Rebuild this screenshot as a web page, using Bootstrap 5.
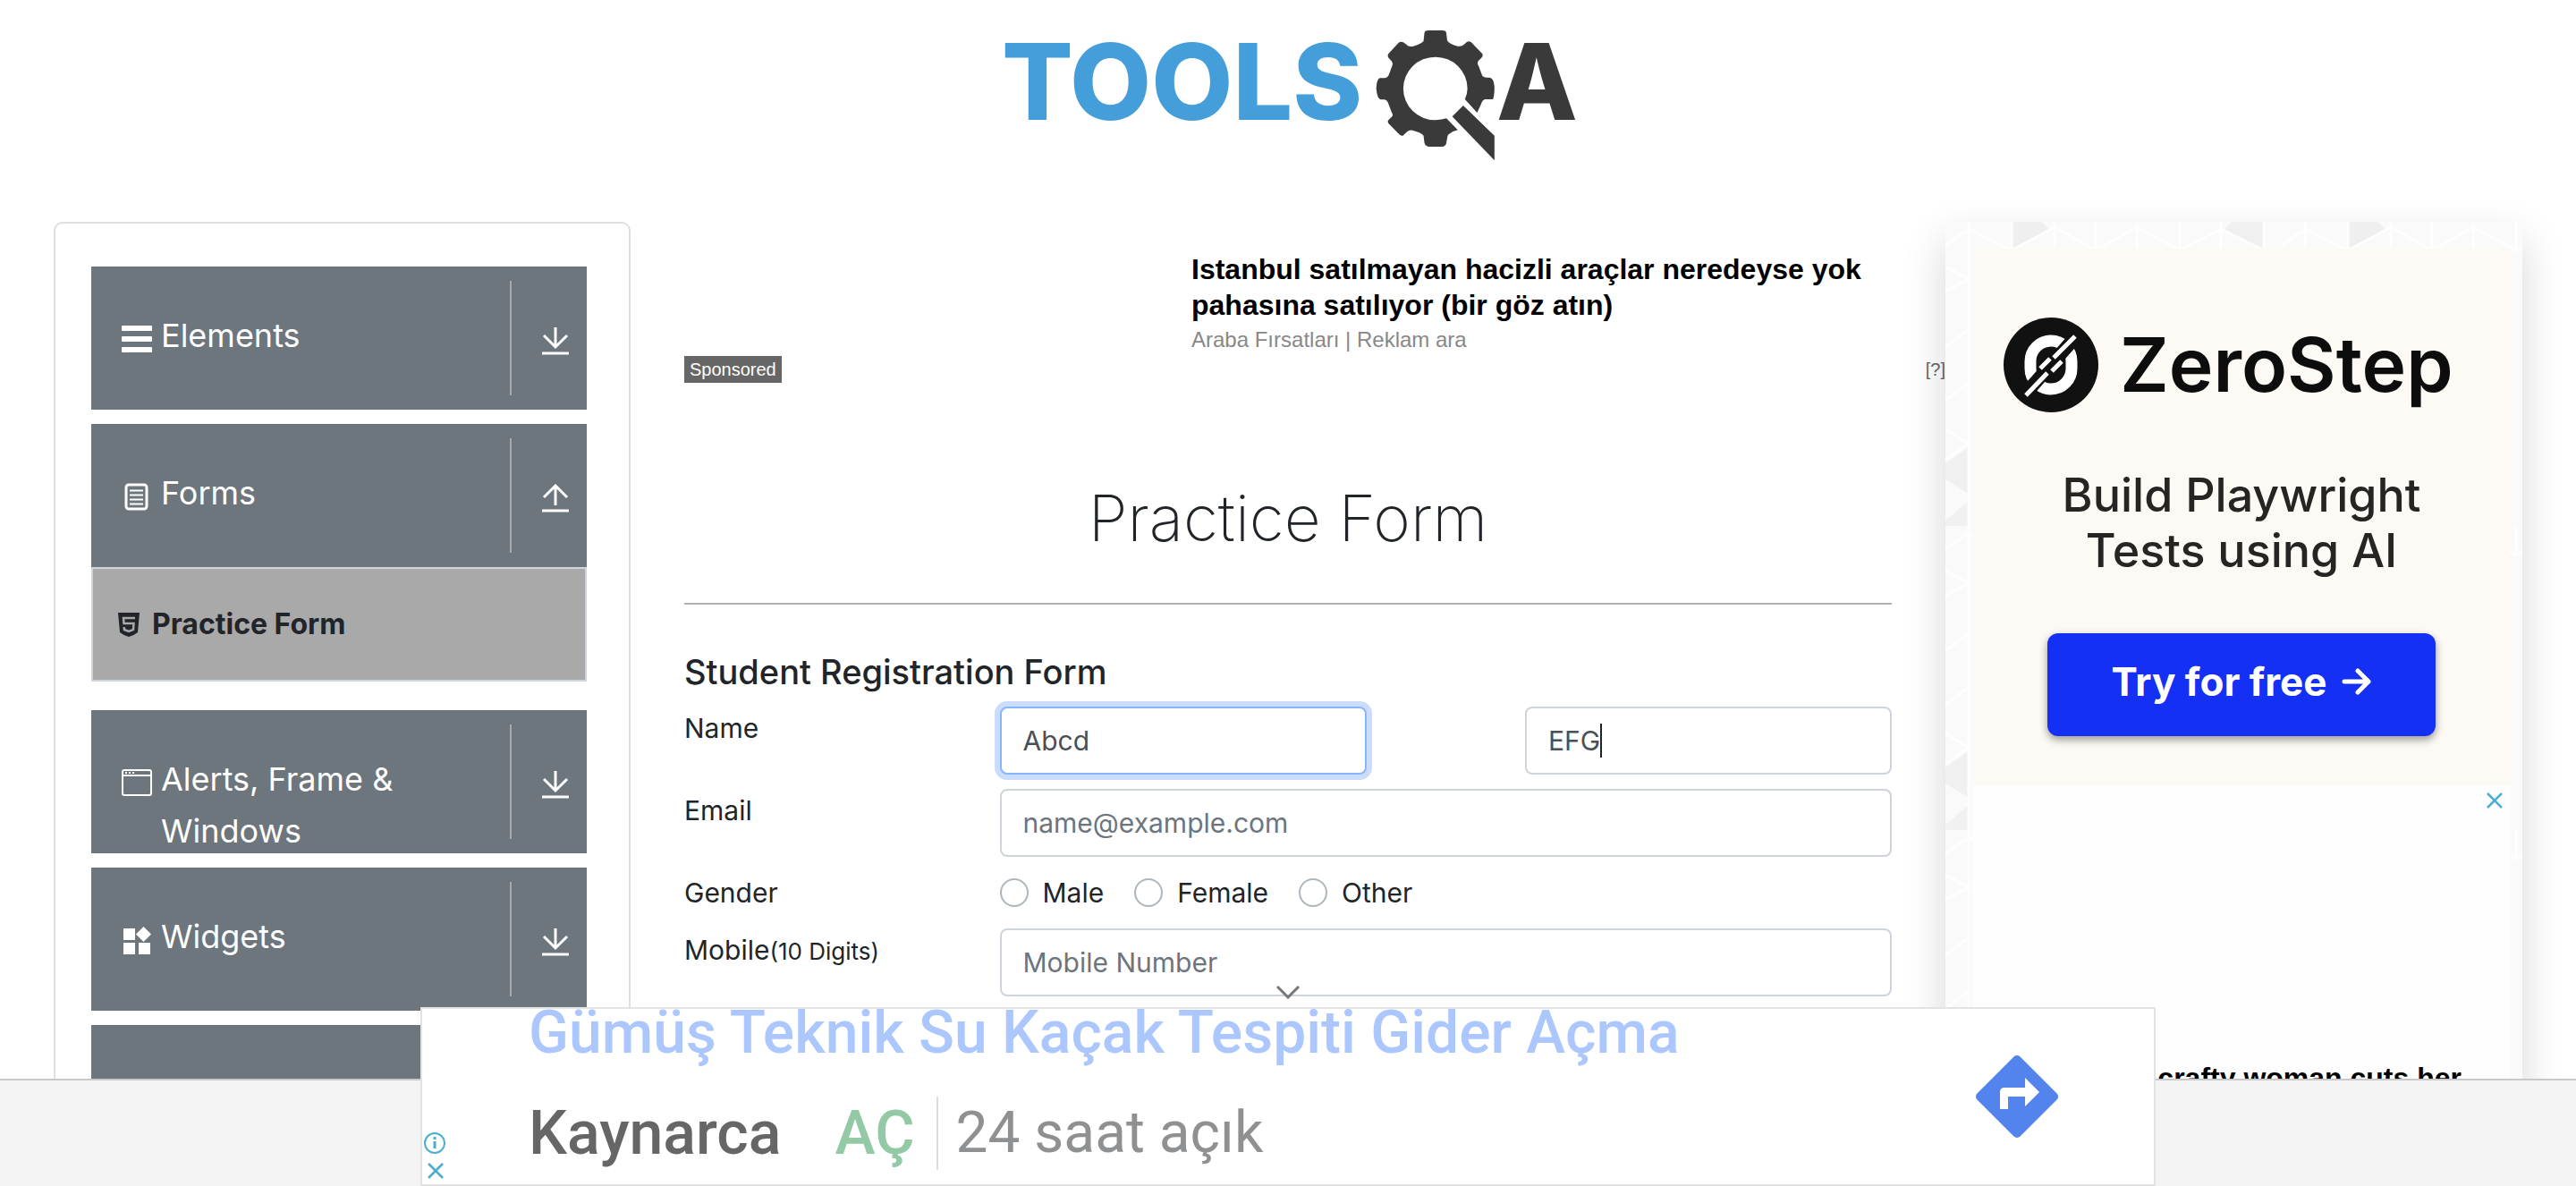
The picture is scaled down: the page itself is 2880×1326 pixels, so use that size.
<!DOCTYPE html>
<html lang="en">
<head>
<meta charset="utf-8">
<meta name="viewport" content="width=device-width, initial-scale=1">
<title>ToolsQA - Practice Form</title>
<link href="https://cdn.jsdelivr.net/npm/bootstrap@5.3.0/dist/css/bootstrap.min.css" rel="stylesheet">
<script src="https://cdn.jsdelivr.net/npm/bootstrap@5.3.0/dist/js/bootstrap.bundle.min.js"></script>
<style>
body { font-family: Inter, "Noto Sans", sans-serif; font-size: 30px; line-height: 36px; color: #212529; background: #fff; }
.site-header { height: 248px; }
.page-body { padding: 0 60px; min-height: 0; }
.page-row, .form-line { --bs-gutter-x: 60px; }
.arial { font-family: "Liberation Sans", Arial, sans-serif; }

/* sidebar */
.menu-panel { border: 2px solid #dfdfdf; border-radius: 10px; padding: 48px 47px 0 40px; height: 1400px; }
.menu-tile { height: 160px; background: #6d757d; color: #fff; border: 0; padding: 0; font-size: 36px; line-height: 58px; margin-bottom: 16px; overflow: hidden; }
.menu-tile.is-open { margin-bottom: 0; }
.tile-label { padding: 48px 0 0 34px; gap: 10px; }
.tile-icon { width: 34px; height: 66px; flex: none; }
.tile-rule { width: 2px; margin: 16px 0; background: #a9a9a9; }
.tile-arrow { width: 84px; padding: 6px 20px 0 0; }
.menu-sub { height: 128px; background: #a9a9a9; border: 2px solid #ced4da; color: #212529; font-size: 32px; font-weight: 700; padding-left: 28px; gap: 14px; margin-bottom: 32px; }

/* native ad above the form */
.native-ad { margin-right: -60px; padding-top: 33px; color: #000; }
.native-text { margin-left: 40%; padding-left: 3px; }
.ad-headline { font-size: 32px; line-height: 40px; font-weight: 700; margin: 0 0 4px; }
.ad-source { font-size: 24px; line-height: 30px; color: #888; margin: 0 0 3px; }
.ad-tag { background: #666; color: #fff; font-size: 20px; line-height: 30px; padding: 0 6px; }
.ad-help { font-size: 20px; line-height: 30px; color: #666; text-decoration: none; }

/* form */
.page-title { font-size: 71px; line-height: 84px; font-weight: 200; margin: 109px 0 53px; }
.title-rule { height: 2px; background: #b1b1b1; border: 0; opacity: 1; margin: 0 0 52px; }
.form-title { font-size: 38px; line-height: 46px; font-weight: 500; margin: 0 0 16px; }
.form-line { margin-bottom: 16px; }
.line-label { padding-top: 6px; }
.line-label .hint { font-size: 26px; }
.text-box { height: 76px; font-size: 30px; padding: 0 24px; border: 2px solid #ced4da; border-radius: 8px; color: #495057; }
.text-box::placeholder { color: #6c757d; opacity: 1; }
.text-box.is-active { border-color: #86b7fe; box-shadow: 0 0 0 6px #cbdcfd; }
.caret-bar { position: absolute; left: 84px; top: 19px; width: 2px; height: 38px; background: #212529; }
.radio-line { height: 48px; gap: 34px; }
.radio-line .form-check { gap: 16px; }
.radio-line .form-check-input { width: 32px; height: 32px; border: 2px solid #adb5bd; }

/* right rail */
.rail { position: relative; background: #fafafa; box-shadow: 0 20px 45px rgba(0,0,0,.16); height: 1400px; padding: 30px 14px 0 31px; }
.rail-pattern { position: absolute; inset: 0; width: 100%; height: 100%; }
.rail-inner { position: relative; background: #fefefe; height: 1300px; }
.zs-ad { background: #fdf9f4; height: 600px; padding-top: 77px; }
.zs-brand { padding-left: 34px; gap: 24px; font-size: 84px; line-height: 106px; font-weight: 600; color: #0d0d0d; }
.zs-copy { margin: 62px 0 61px; font-size: 52px; line-height: 62px; font-weight: 500; color: #262524; text-align: center; }
.zs-btn { width: 434px; height: 115px; background: #1430f5; color: #fff; font-size: 44px; font-weight: 700; border-radius: 12px; box-shadow: 0 4px 10px rgba(0,0,0,.4); padding: 0 0 8px; gap: 16px; }
.zs-btn:hover { background: #1430f5; color: #fff; }
.close-x { background: none; border: 0; padding: 0; line-height: 0; display: block; }
.rail-close { padding: 8px 8px 0 0; }
.rail-story { margin-top: 281px; padding-right: 54px; font-size: 32px; line-height: 40px; font-weight: 700; color: #000; text-align: right; }

/* footer and anchored ad */
.site-footer { height: 120px; background: #f4f4f4; border-top: 2px solid #c8c8c8; }
.anchor-ad { position: fixed; bottom: 0; left: 50%; transform: translateX(-50%); width: 67.36%; z-index: 10; }
.anchor-box { height: 200px; background: #fff; border: 2px solid #e3e3e3; overflow: hidden; font-family: Roboto, "Noto Sans", sans-serif; font-size: 66px; line-height: 78px; }
.anchor-toggle { position: absolute; top: -25px; left: 50%; margin-left: -14px; }
.anchor-marks { width: 28px; padding: 0 0 6px 2px; gap: 10px; }
.anchor-text { margin: -12px 0 0 91px; }
.anchor-text a { color: #acc7fd; text-decoration: none; font-weight: 500; }
.anchor-meta { margin-top: 32px; height: 82px; font-size: 68px; }
.place { color: #666; font-weight: 500; margin-right: 60px; }
.open-tag { color: #93c9a5; font-weight: 500; margin-right: 24px; }
.meta-rule { width: 2px; background: #dadce0; margin-right: 20px; align-self: stretch; }
.hours { color: #8f9092; font-size: 64px; }
.route-mark { margin-right: 106px; }
</style>
</head>
<body>
<div class="vh-100 d-flex flex-column overflow-hidden">
  <header class="site-header d-flex justify-content-center flex-shrink-0">
    <a href="#" aria-label="Tools QA home">
      <svg width="648" height="200" viewBox="1116 0 648 200">
        <text x="1120" y="134" font-family="Inter, sans-serif" font-weight="800" font-size="118" fill="#439ed9">TOOLS</text>
        <text x="1673" y="134" font-family="Inter, sans-serif" font-weight="800" font-size="118" fill="#3a3a3a">A</text>
        <g transform="translate(1080 0) scale(.4719 .3333)" fill="#3a3a3a">
          <path d="M1086 112Q1086 102 1096 102H1128Q1138 102 1138 112L1140 135Q1142 146 1165 155Q1175 157 1180 149L1187 140Q1192 136 1197 142L1223 180Q1226 186 1221 194L1214 204Q1210 212 1214 220L1222 250Q1224 260 1232 260H1240Q1250 260 1252 290Q1252 325 1248 333H1230Q1224 334 1220 350L1211 378L1182 333Q1188 315 1188 297A76 106 0 1 0 1112 403Q1128 402 1138 397L1165 436Q1152 440 1142 452Q1140 460 1138 480Q1136 491 1128 492H1096Q1087 490 1086 478L1084 455Q1080 445 1058 437Q1050 435 1045 442L1035 455Q1030 457 1026 450L1001 414Q997 405 1003 400L1010 390Q1012 383 1008 375L1000 345Q997 335 990 334H982Q974 330 972 297Q973 266 980 262H992Q1000 260 1002 250L1010 220Q1012 212 1009 206L1000 192Q998 185 1001 180L1025 143Q1030 138 1036 142L1044 150Q1048 158 1060 155Q1080 146 1084 138Z"/>
          <path d="M1178 354L1252 455V538L1152 391Z"/>
        </g>
      </svg>
    </a>
  </header>

  <main class="page-body container-fluid flex-fill">
    <div class="page-row row">
      <nav class="col-3">
        <div class="menu-panel">
          <button class="menu-tile w-100 d-flex text-start" type="button">
            <span class="tile-label d-flex flex-fill">
              <svg class="tile-icon" viewBox="0 0 34 64" fill="#fff"><rect y="17" width="34" height="6" rx="1"/><rect y="29" width="34" height="6" rx="1"/><rect y="41" width="34" height="6" rx="1"/></svg>
              <span>Elements</span>
            </span>
            <span class="tile-rule"></span>
            <span class="tile-arrow d-flex align-items-center justify-content-end align-self-center"><svg width="30" height="32" viewBox="0 0 30 32" fill="none" stroke="#fff" stroke-width="3"><path d="M15 1V22M2 10L15 23L28 10M0 30H30"/></svg></span>
          </button>
          <button class="menu-tile is-open w-100 d-flex text-start" type="button">
            <span class="tile-label d-flex flex-fill">
              <svg class="tile-icon" viewBox="0 0 34 64" fill="none" stroke="#fff"><rect x="5" y="19" width="23" height="27" rx="3" stroke-width="3"/><path d="M9 25.500H24M9 30.500H24M9 35.500H24M9 40.500H24" stroke-width="2"/></svg>
              <span>Forms</span>
            </span>
            <span class="tile-rule"></span>
            <span class="tile-arrow d-flex align-items-center justify-content-end align-self-center"><svg width="30" height="32" viewBox="0 0 30 32" fill="none" stroke="#fff" stroke-width="3"><path d="M15 24V3M2 15L15 2L28 15M0 30H30"/></svg></span>
          </button>
          <a href="#" class="menu-sub d-flex align-items-center text-decoration-none">
            <svg width="24" height="27" viewBox="0 0 24 27"><path d="M0 0H24L22 22Q17 26 12 27Q7 26 2 22Z" fill="#212529"/><path d="M19 6H6L6.500 12H17.500L17 19L12 21L7 19L6.700 16" fill="none" stroke="#a9a9a9" stroke-width="2.500"/></svg>
            <span>Practice Form</span>
          </a>
          <button class="menu-tile w-100 d-flex text-start" type="button">
            <span class="tile-label d-flex flex-fill">
              <svg class="tile-icon" viewBox="0 0 34 64" fill="none" stroke="#fff" stroke-width="2"><rect x="1" y="18" width="32" height="28" rx="2"/><path d="M1 24H33M4 21H6M8 21H10M12 21H14"/></svg>
              <span>Alerts, Frame &amp; <br>Windows</span>
            </span>
            <span class="tile-rule"></span>
            <span class="tile-arrow d-flex align-items-center justify-content-end align-self-center"><svg width="30" height="32" viewBox="0 0 30 32" fill="none" stroke="#fff" stroke-width="3"><path d="M15 1V22M2 10L15 23L28 10M0 30H30"/></svg></span>
          </button>
          <button class="menu-tile w-100 d-flex text-start" type="button">
            <span class="tile-label d-flex flex-fill">
              <svg class="tile-icon" viewBox="0 0 34 64" fill="#fff"><path d="M2 19H15V32H2ZM2 35H15V48H2ZM19 35H32V48H19ZM24.500 17L33 25.500L24.500 34L16 25.500Z"/></svg>
              <span>Widgets</span>
            </span>
            <span class="tile-rule"></span>
            <span class="tile-arrow d-flex align-items-center justify-content-end align-self-center"><svg width="30" height="32" viewBox="0 0 30 32" fill="none" stroke="#fff" stroke-width="3"><path d="M15 1V22M2 10L15 23L28 10M0 30H30"/></svg></span>
          </button>
          <div class="menu-tile"></div>
        </div>
      </nav>

      <section class="col-6">
        <div class="native-ad arial">
          <div class="native-text">
            <p class="ad-headline">Istanbul satılmayan hacizli araçlar neredeyse yok<br>pahasına satılıyor (bir göz atın)</p>
            <p class="ad-source">Araba Fırsatları | Reklam ara</p>
          </div>
          <div class="d-flex justify-content-between">
            <span class="ad-tag">Sponsored</span>
            <a class="ad-help" href="#">[?]</a>
          </div>
        </div>
        <h1 class="page-title text-center">Practice Form</h1>
        <hr class="title-rule">
        <form>
          <h5 class="form-title">Student Registration Form</h5>
          <div class="form-line row">
            <label class="line-label col-3" for="first">Name</label>
            <div class="col-4"><input id="first" class="text-box is-active form-control" type="text" value="Abcd"></div>
            <div class="col-4 offset-1">
              <div class="position-relative">
                <input id="last" aria-label="Last name" class="text-box form-control" type="text" value="EFG">
                <span class="caret-bar"></span>
              </div>
            </div>
          </div>
          <div class="form-line row">
            <label class="line-label col-3" for="email">Email</label>
            <div class="col-9"><input id="email" class="text-box form-control" type="email" placeholder="name@example.com"></div>
          </div>
          <div class="form-line row">
            <div class="line-label col-3">Gender</div>
            <div class="col-9">
              <div class="radio-line d-flex align-items-center">
                <div class="form-check d-flex align-items-center p-0 m-0"><input class="form-check-input m-0" type="radio" name="gender" id="male"><label for="male">Male</label></div>
                <div class="form-check d-flex align-items-center p-0 m-0"><input class="form-check-input m-0" type="radio" name="gender" id="female"><label for="female">Female</label></div>
                <div class="form-check d-flex align-items-center p-0 m-0"><input class="form-check-input m-0" type="radio" name="gender" id="other"><label for="other">Other</label></div>
              </div>
            </div>
          </div>
          <div class="form-line row">
            <label class="line-label col-3" for="mobile">Mobile<span class="hint">(10 Digits)</span></label>
            <div class="col-9"><input id="mobile" class="text-box form-control" type="tel" placeholder="Mobile Number"></div>
          </div>
        </form>
      </section>

      <aside class="col-3">
        <div class="rail">
          <svg class="rail-pattern" aria-hidden="true">
            <defs>
              <pattern id="tri" width="376" height="340" patternUnits="userSpaceOnUse">
                <path d="M74 0H108L117 9L74 32Z" fill="#efefef"/>
                <path d="M356 0V32L310 10L320 0Z" fill="#f0f0f0"/>
                <path d="M0 270L26 252V304L0 288Z" fill="#f0f0f0"/>
                <path d="M0 334L26 312V340H0Z" fill="#f1f1f1"/>
                <path d="M26 0V340M74 0V34M122 0V34M168 0V34M214 0V34M262 0V34M308 0V34M356 0V34M0 26L26 8L74 32L122 6L168 32L214 6L262 32L308 8L356 32M0 50L26 64L0 78M0 140L26 120M0 200L26 180M0 232L26 248L0 266" fill="none" stroke="#fefefe" stroke-width="3"/>
              </pattern>
            </defs>
            <rect width="100%" height="100%" fill="url(#tri)"/>
          </svg>
          <div class="rail-inner">
            <div class="zs-ad">
              <div class="zs-brand d-flex align-items-center">
                <svg width="106" height="106" viewBox="0 0 106 106">
                  <circle cx="53" cy="53" r="53" fill="#111"/>
                  <rect x="30" y="26" width="46" height="54" rx="23" fill="none" stroke="#fff" stroke-width="13"/>
                  <path d="M22 88L82 20" stroke="#111" stroke-width="15"/>
                  <path d="M25 87L49 62M56 45L80 21M41 57L52 46M54 60L65 49" stroke="#fff" stroke-width="5"/>
                </svg>
                <span>ZeroStep</span>
              </div>
              <p class="zs-copy">Build Playwright<br>Tests using AI</p>
              <button class="zs-btn btn d-flex align-items-center justify-content-center mx-auto" type="button">Try for free
                <svg width="34" height="32" viewBox="0 0 34 32" fill="none" stroke="#fff" stroke-width="5" stroke-linecap="round" stroke-linejoin="round"><path d="M3 16H30M18 4L30 16L18 28"/></svg>
              </button>
            </div>
            <div class="rail-close d-flex justify-content-end">
              <button class="close-x" type="button" aria-label="Close ad"><svg width="18" height="18" viewBox="0 0 18 18" stroke="#4aaecc" stroke-width="2.500"><path d="M1 1L17 17M17 1L1 17"/></svg></button>
            </div>
            <p class="rail-story arial">crafty woman cuts her</p>
          </div>
        </div>
      </aside>
    </div>
  </main>

  <footer class="site-footer flex-shrink-0 position-relative"></footer>
</div>

<div class="anchor-ad">
  <button class="close-x anchor-toggle" type="button" aria-label="Collapse ad"><svg width="28" height="16" viewBox="0 0 28 16" fill="none" stroke="#777" stroke-width="3"><path d="M2 2L14 14L26 2"/></svg></button>
  <div class="anchor-box d-flex">
    <div class="anchor-marks d-flex flex-column justify-content-end align-items-start">
      <svg width="24" height="24" viewBox="0 0 24 24" fill="none" stroke="#4aaecc"><circle cx="12" cy="12" r="11" stroke-width="2"/><path d="M12 10V18M12 5V8" stroke-width="3"/></svg>
      <button class="close-x ms-1" type="button" aria-label="Close ad"><svg width="18" height="18" viewBox="0 0 18 18" stroke="#4aaecc" stroke-width="2.500"><path d="M1 1L17 17M17 1L1 17"/></svg></button>
    </div>
    <div class="anchor-text flex-fill text-nowrap">
      <a href="#">Gümüş Teknik Su Kaçak Tespiti Gider Açma</a>
      <div class="anchor-meta d-flex align-items-center">
        <span class="place">Kaynarca</span><span class="open-tag">AÇ</span><span class="meta-rule"></span><span class="hours">24 saat açık</span>
      </div>
    </div>
    <svg class="route-mark align-self-center flex-shrink-0" width="94" height="94" viewBox="0 0 94 94"><rect x="13" y="13" width="68" height="68" rx="5" transform="rotate(45 47 47)" fill="#5383ec"/><path d="M28 61V42Q28 37 33 37H56V26L72 42L56 58V47H37V61Z" fill="#fff"/></svg>
  </div>
</div>
</body>
</html>
